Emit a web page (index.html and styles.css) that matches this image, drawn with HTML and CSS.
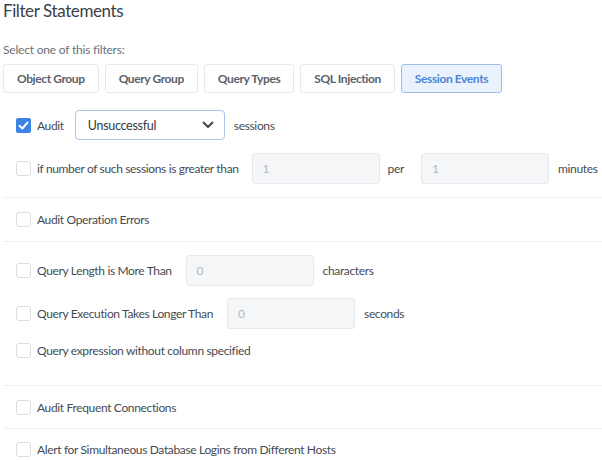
FILE: index.html
```html
<!DOCTYPE html>
<html>
<head>
<meta charset="utf-8">
<link rel="stylesheet" href="styles.css">
</head>
<body>
<div class="page">
  <h1 class="title">Filter Statements</h1>
  <div class="hint">Select one of this filters:</div>
  <div class="tabs">
    <button class="tab">Object Group</button>
    <button class="tab">Query Group</button>
    <button class="tab">Query Types</button>
    <button class="tab">SQL Injection</button>
    <button class="tab active">Session Events</button>
  </div>

  <div class="section s1">
    <div class="row">
      <span class="cb checked"><svg viewBox="0 0 14 14" width="14" height="14"><path d="M3.3 7.2 L5.9 9.8 L10.8 4.2" fill="none" stroke="#fff" stroke-width="1.8" stroke-linecap="round" stroke-linejoin="round"/></svg></span>
      <span class="label">Audit</span>
      <div class="select m11"><span>Unsuccessful</span><svg class="chev" viewBox="0 0 12 8" width="12" height="8"><path d="M1.5 1.5 L6 6 L10.5 1.5" fill="none" stroke="#3a3f45" stroke-width="1.8" stroke-linecap="round" stroke-linejoin="round"/></svg></div>
      <span class="label m9">sessions</span>
    </div>
    <div class="row r2">
      <span class="cb"></span>
      <span class="label">if number of such sessions is greater than</span>
      <div class="input m13">1</div>
      <span class="label m8">per</span>
      <div class="input m17">1</div>
      <span class="label m9">minutes</span>
    </div>
  </div>

  <div class="section s2">
    <div class="row">
      <span class="cb"></span>
      <span class="label">Audit Operation Errors</span>
    </div>
  </div>

  <div class="section s3">
    <div class="row">
      <span class="cb"></span>
      <span class="label">Query Length is More Than</span>
      <div class="input m14">0</div>
      <span class="label m9">characters</span>
    </div>
    <div class="row r2">
      <span class="cb"></span>
      <span class="label">Query Execution Takes Longer Than</span>
      <div class="input m14">0</div>
      <span class="label m9">seconds</span>
    </div>
    <div class="row r3">
      <span class="cb"></span>
      <span class="label">Query expression without column specified</span>
    </div>
  </div>

  <div class="section s4">
    <div class="row">
      <span class="cb"></span>
      <span class="label">Audit Frequent Connections</span>
    </div>
  </div>

  <div class="section s5">
    <div class="row">
      <span class="cb"></span>
      <span class="label">Alert for Simultaneous Database Logins from Different Hosts</span>
    </div>
  </div>
</div>
</body>
</html>
```

FILE: styles.css
```css
html, body {
  margin: 0;
  padding: 0;
  background: #ffffff;
}
body {
  font-family: "Lato", "Noto Sans", sans-serif;
  color: #454b52;
  width: 602px;
  height: 460px;
  overflow: hidden;
}
.page {
  padding: 0 0 0 3px;
}
.title {
  margin: 0;
  font-size: 17px;
  letter-spacing: -0.4px;
  font-weight: 400;
  line-height: 22px;
  color: #3b4148;
}
.hint {
  margin-top: 20px;
  font-size: 12px;
  letter-spacing: -0.2px;
  line-height: 16px;
  color: #6a7078;
}
.tabs {
  display: flex;
  gap: 6px;
  margin-top: 6px;
}
.tab {
  height: 29px;
  padding: 0 13px;
  border: 1px solid #e6e8eb;
  border-radius: 3px;
  background: #ffffff;
  font-family: inherit;
  font-size: 12px;
  letter-spacing: -0.4px;
  font-weight: 700;
  color: #5b6269;
}
.tab.active {
  background: #e9f2fd;
  border-color: #9dbde9;
  color: #4b86d6;
}
.section {
  border-bottom: 1px solid #eef0f2;
  padding-left: 13px;
}
.s1 { padding-top: 17px; padding-bottom: 13px; }
.s2 { padding-top: 6px; padding-bottom: 7px; }
.s3 { padding-top: 13px; padding-bottom: 20px; }
.s4 { padding-top: 6px; padding-bottom: 6px; }
.s5 { padding-top: 5px; border-bottom: none; }
.row {
  display: flex;
  align-items: center;
  height: 30px;
  font-size: 12px;
  letter-spacing: -0.35px;
}
.r2 { margin-top: 13px; height: 31px; }
.r3 { margin-top: 6px; }
.cb {
  width: 13px;
  height: 13px;
  border: 1px solid #d9dde1;
  border-radius: 3px;
  background: #fff;
  margin-right: 6px;
  flex: none;
  display: flex;
}
.cb.checked {
  width: 15px;
  height: 15px;
  border: none;
  background: #3a84e6;
  border-radius: 2px;
}
.cb.checked svg { width: 15px; height: 15px; }
.label {
  white-space: nowrap;
  color: #454b52;
}
.select {
  height: 28px;
  border: 1px solid #a8c6ec;
  border-radius: 4px;
  display: flex;
  align-items: center;
  justify-content: space-between;
  padding: 0 10px 0 12px;
  box-sizing: content-box;
  width: 126px;
  color: #343a40;
  font-size: 12.5px;
  letter-spacing: -0.3px;
}
.chev { flex: none; }
.input {
  width: 116px;
  height: 29px;
  border: 1px solid #e6e8eb;
  border-radius: 3px;
  background: #f5f6f8;
  padding-left: 10px;
  display: flex;
  align-items: center;
  color: #b4b9be;
  font-size: 12px;
  flex: none;
}
.m8 { margin-left: 8px; }
.m9 { margin-left: 9px; }
.m11 { margin-left: 11px; }
.m13 { margin-left: 13px; }
.m14 { margin-left: 14px; }
.m17 { margin-left: 17px; }
```
